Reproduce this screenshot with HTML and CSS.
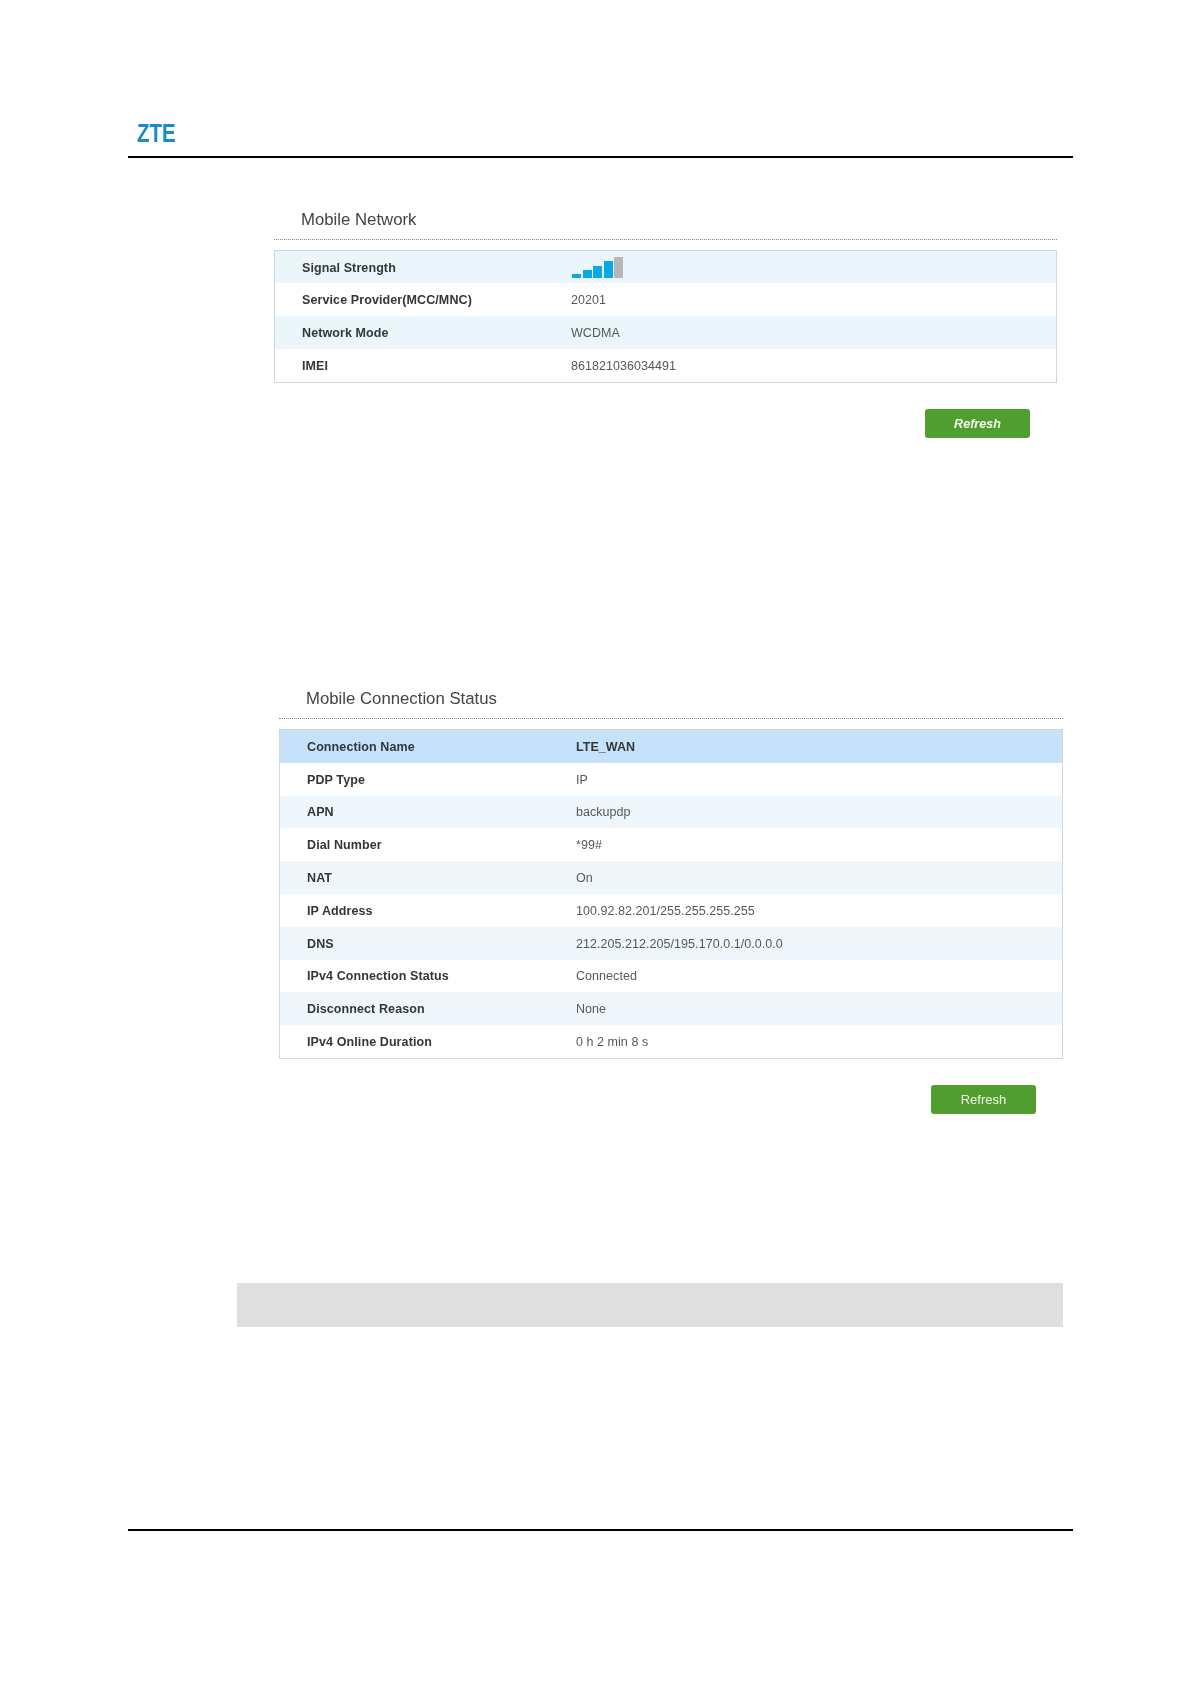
FILE: index.html
```html
<!DOCTYPE html>
<html lang="en">
<head>
<meta charset="utf-8">
<title>ZTE Mobile Network</title>
<link rel="stylesheet" href="styles.css">
</head>
<body>
<div class="page">
  <header class="head">
    <span class="logo">ZTE</span>
  </header>

  <section class="panel panel-a">
    <h2 class="title">Mobile Network</h2>
    <table class="info">
      <tr class="tint sig-row"><th>Signal Strength</th><td>
        <svg class="signal" width="52" height="22" viewBox="0 0 52 22">
          <rect x="1" y="17" width="9" height="4" fill="#0aa9e6"/>
          <rect x="12" y="13" width="9" height="8" fill="#0aa9e6"/>
          <rect x="22" y="9" width="9" height="12" fill="#0aa9e6"/>
          <rect x="33" y="4" width="9" height="17" fill="#0aa9e6"/>
          <rect x="43" y="0" width="9" height="21" fill="#b4b8b9"/>
        </svg></td></tr>
      <tr><th>Service Provider(MCC/MNC)</th><td>20201</td></tr>
      <tr class="tint"><th>Network Mode</th><td>WCDMA</td></tr>
      <tr><th>IMEI</th><td>861821036034491</td></tr>
    </table>
    <div class="actions"><button class="btn btn-italic" type="button">Refresh</button></div>
  </section>

  <section class="panel panel-b">
    <h2 class="title">Mobile Connection Status</h2>
    <table class="info info-b">
      <tr class="hi"><th>Connection Name</th><td>LTE_WAN</td></tr>
      <tr><th>PDP Type</th><td>IP</td></tr>
      <tr class="tint"><th>APN</th><td>backupdp</td></tr>
      <tr><th>Dial Number</th><td>*99#</td></tr>
      <tr class="tint"><th>NAT</th><td>On</td></tr>
      <tr><th>IP Address</th><td>100.92.82.201/255.255.255.255</td></tr>
      <tr class="tint"><th>DNS</th><td>212.205.212.205/195.170.0.1/0.0.0.0</td></tr>
      <tr><th>IPv4 Connection Status</th><td>Connected</td></tr>
      <tr class="tint"><th>Disconnect Reason</th><td>None</td></tr>
      <tr><th>IPv4 Online Duration</th><td>0 h 2 min 8 s</td></tr>
    </table>
    <div class="actions"><button class="btn" type="button">Refresh</button></div>
  </section>

  <div class="band"></div>
  <footer class="foot"></footer>
</div>
</body>
</html>
```
FILE: styles.css
```css
html, body { margin: 0; padding: 0; background: #fff; }
body { font-family: "Liberation Sans", Arial, sans-serif; color: #3c4043; }
.page { width: 945px; margin-left: 128px; height: 1684px; overflow: hidden; filter: blur(0.25px); }

.head { height: 156px; border-bottom: 2px solid #000; display: flex; align-items: flex-end; }
.logo { display: block; margin: 0 0 10px 9px; font-size: 26px; line-height: 26px; font-weight: bold; color: #1a8cc4; transform: scaleX(0.79); transform-origin: left center; }

.panel-a { margin: 50px 0 0 146px; width: 783px; }
.panel-b { margin: 249px 0 0 151px; width: 784px; }

.title { margin: 0; padding: 0 0 7px 27px; height: 24px; font-size: 16.75px; line-height: 24px; font-weight: normal; color: #444; border-bottom: 1px dotted #888; }

.info { margin-top: 10px; width: 100%; border-collapse: separate; border-spacing: 0; border: 1px solid #cfd6dc; table-layout: fixed; }
.info th, .info td { box-sizing: border-box; padding: 1px 0 0 1px; font-size: 12.5px; height: 33px; text-align: left; vertical-align: middle; }
.info th { width: 295px; padding-left: 27px; font-weight: bold; color: #33373a; letter-spacing: 0.1px; }
.info td { color: #55595c; letter-spacing: 0.05px; }
.sig-row th, .sig-row td { height: 32px; }
.signal { display: block; }
.tint th, .tint td { background: #eaf5fc; }
.hi th, .hi td { background: #c5e2fa; }
.hi td { color: #33373a; font-weight: bold; }
.info-b th, .info-b td { height: 32.8px; }
.info-b .tint th, .info-b .tint td { background: #eff7fd; }

.actions { display: flex; justify-content: flex-end; padding-right: 27px; margin-top: 26px; }
.btn { width: 105px; height: 29px; border: 0; border-radius: 3px; background: #4f9e2f; color: #f2fbe9; font: 13px "Liberation Sans", Arial, sans-serif; padding: 0; }
.btn-italic { font-style: italic; font-weight: bold; font-size: 12.6px; }

.band { margin: 169px 0 0 109px; width: 826px; height: 44px; background: #dfdfdf; }
.foot { margin-top: 202px; height: 2px; background: #000; }
```
